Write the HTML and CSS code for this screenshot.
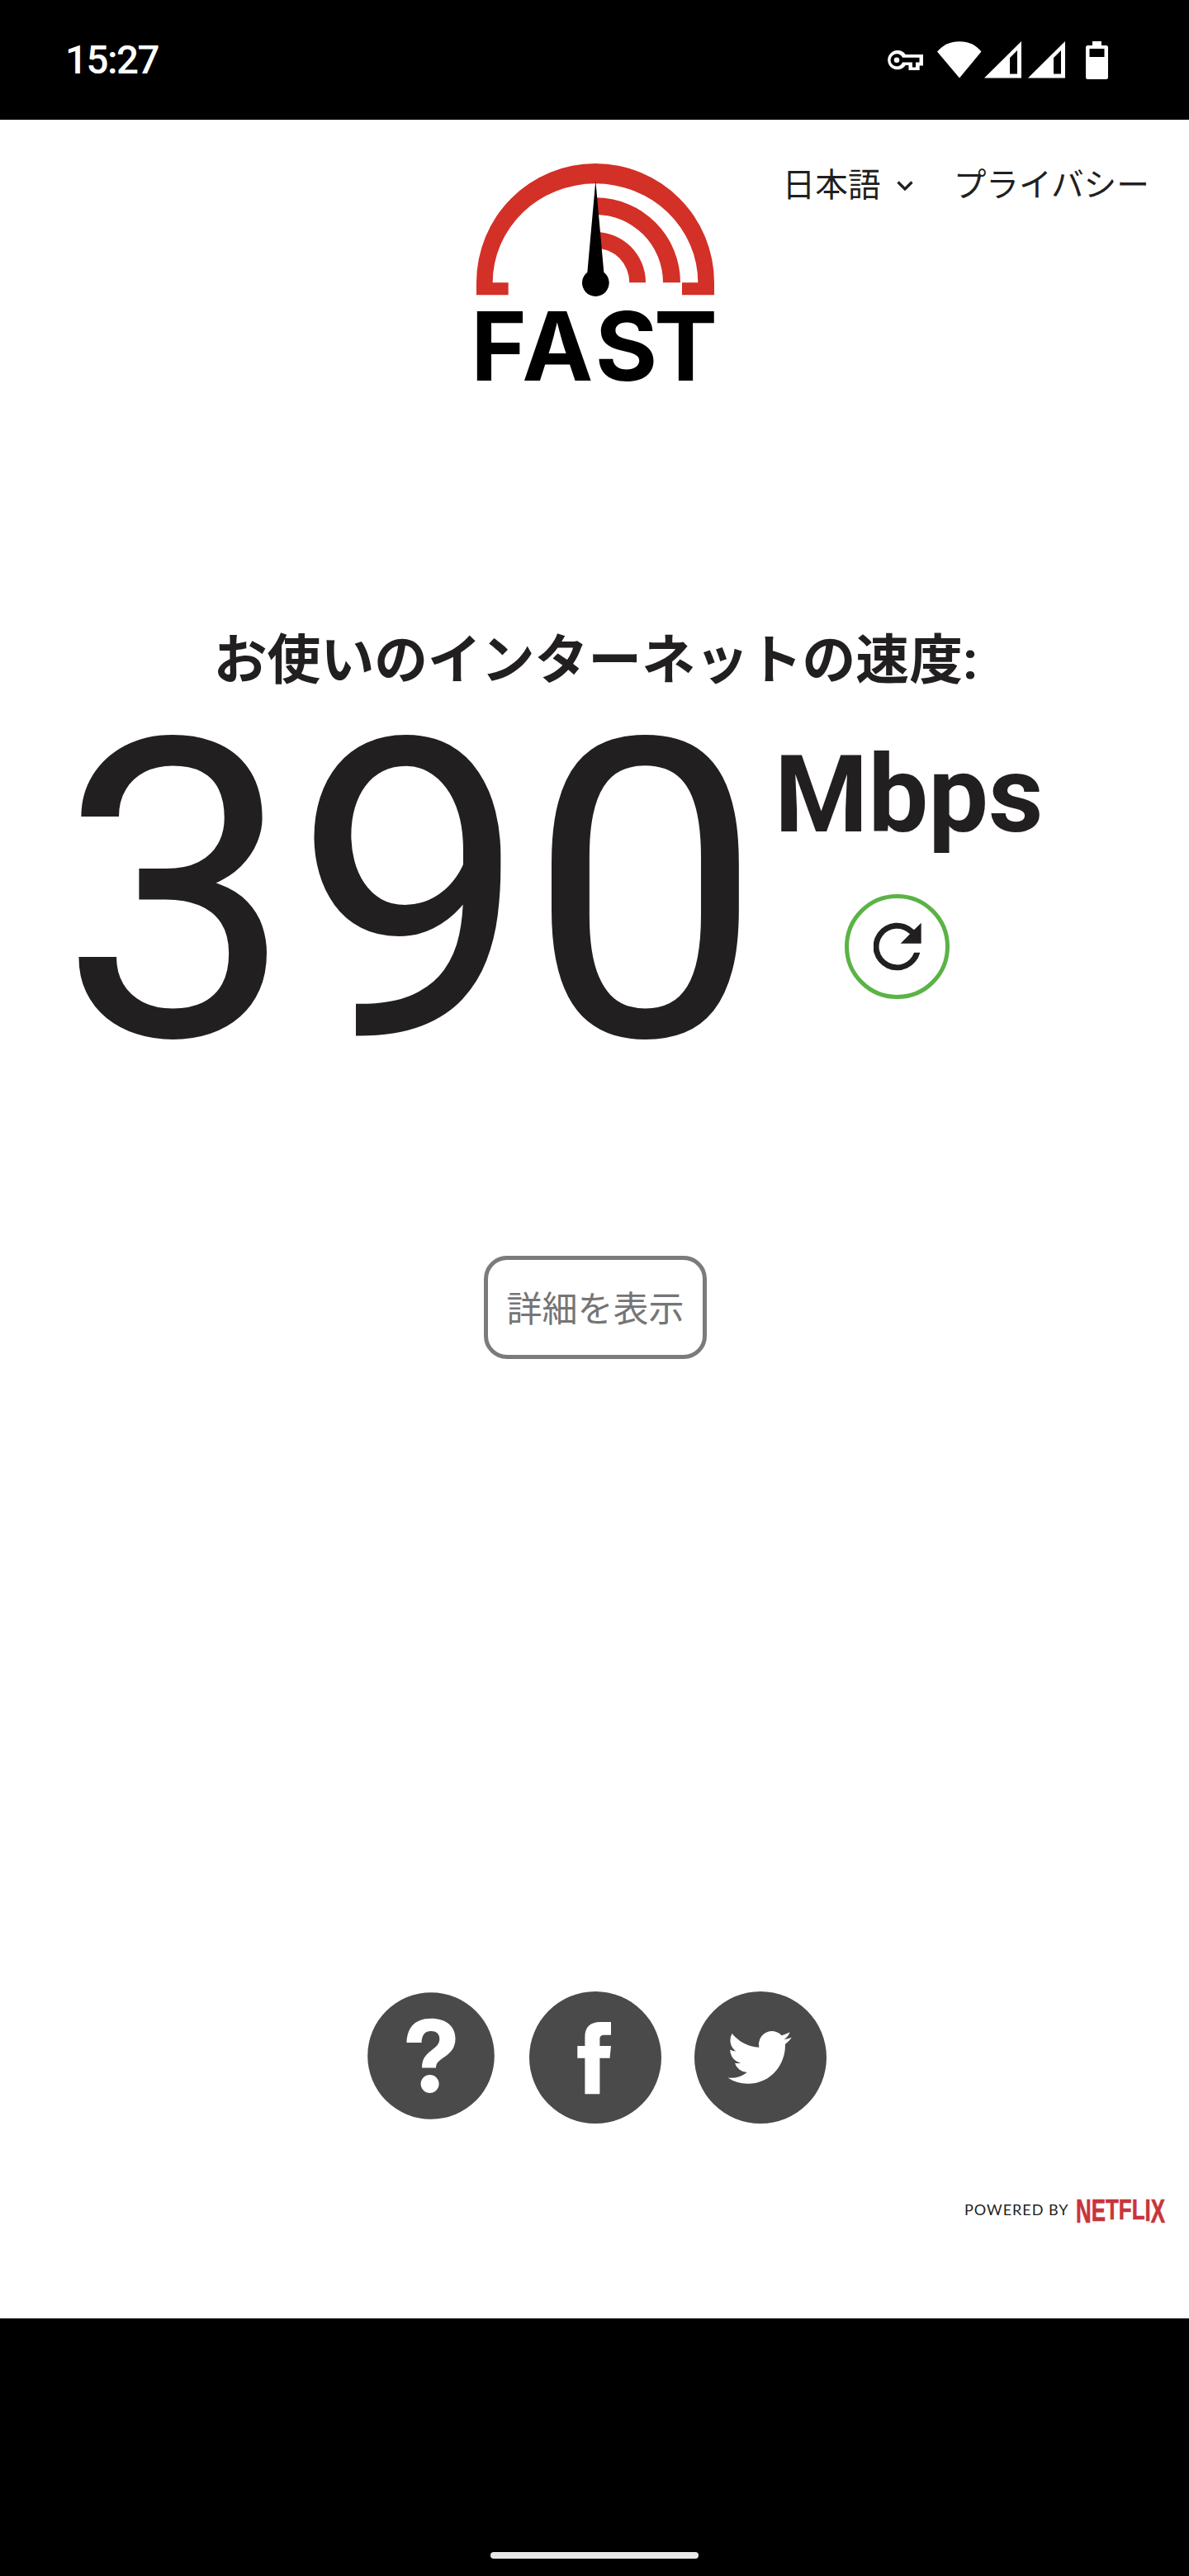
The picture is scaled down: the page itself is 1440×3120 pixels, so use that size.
FILE: index.html
```html
<!DOCTYPE html>
<html lang="ja">
<head>
<meta charset="utf-8">
<title>FAST</title>
<link rel="stylesheet" href="styles.css">
</head>
<body>
<div class="status-bar">
  <span class="clock">15:27</span>
  <div class="status-icons">
    <svg class="icon-key" viewBox="0 0 44 26" width="44" height="26"><path fill="#fff" fill-rule="evenodd" d="M12 1a11.700 11.700 0 0 1 10.700 5H44v13.500h-4.300V25H26.500v-6H22.700A11.700 11.700 0 1 1 12 1ZM12 5.300a7.500 7.500 0 1 0 7 10.200h12v6h4v-6h4.500V9.800H19A7.500 7.500 0 0 0 12 5.300Z"/><circle cx="12" cy="12.700" r="3.300" fill="#fff"/></svg>
    <svg class="icon-wifi" viewBox="0 0 54 45" width="54" height="45"><path fill="#fff" d="M0 12.500C7 4.500 16 .3 27 .3S47 4.500 53.500 12.500L27 44.500Z"/></svg>
    <svg class="icon-signal" viewBox="0 0 45 45" width="45" height="45"><path fill="#fff" fill-rule="evenodd" d="M0 44.500 45 0V44.500ZM31 20V39.500H40V11Z"/></svg>
    <svg class="icon-signal" viewBox="0 0 45 45" width="45" height="45"><path fill="#fff" fill-rule="evenodd" d="M0 44.500 45 0V44.500ZM31 20V39.500H40V11Z"/></svg>
    <svg class="icon-battery" viewBox="0 0 27 46" width="27" height="46"><path fill="#fff" fill-rule="evenodd" d="M8 0H19V5H24.500Q27 5 27 7.500V43.500Q27 46 24.500 46H2.500Q0 46 0 43.500V7.500Q0 5 2.500 5H8ZM4.500 9V19H22.500V9Z"/></svg>
  </div>
</div>

<main class="page">
  <header class="header">
    <svg class="logo" viewBox="51 53 864 801" width="288" height="267">
      <g fill="#d33027">
        <path d="M51 531V485A432 432 0 0 1 915 485V531H798V486H856A373 360 0 0 0 110 486H167V531Z"/>
        <path d="M484 177A308 309 0 0 1 792 486H729A245 247 0 0 0 484 239Z"/>
        <path d="M484 302A182 184 0 0 1 666 486H607A123 125 0 0 0 484 361Z"/>
      </g>
      <path d="M484 116 514 448A49 49 0 1 1 454 448Z"/>
      <text class="logo-text" x="31 217 482 696" y="843">FAST</text>
    </svg>
    <nav class="nav">
      <a class="nav-lang">日本語<svg class="chevron" viewBox="0 0 20 13" width="20" height="13"><path d="M1.500 1.500 10 10 18.500 1.500" fill="none" stroke="#221f20" stroke-width="3.200"/></svg></a>
      <a class="nav-privacy">プライバシー</a>
    </nav>
  </header>

  <h1 class="title">お使いのインターネットの速度:</h1>

  <section class="result">
    <div class="speed">390</div>
    <div class="side">
      <div class="unit">Mbps</div>
      <button class="refresh" aria-label="再実行"><svg viewBox="0 0 174 176" width="58" height="58.700"><path fill="#221f20" d="M169 110A86.500 86.500 0 1 1 147 28L173 2V77H98L132 43A65.500 65.500 0 1 0 147 110Z"/></svg></button>
    </div>
  </section>

  <button class="details">詳細を表示</button>

  <div class="social">
    <svg class="help" viewBox="0 0 154 154" width="154" height="154"><circle cx="77" cy="77" r="76.800" fill="#4a4a4a"/><path fill="#fff" d="M47.400 61C48 42 58 31.700 77 31.700 95 31.700 106.500 41 106.500 56 106.500 67 101 73 94.500 77.500 86 83 83 86 83 91.500H66C66 80 71 75.500 78 70 84 65.500 87.300 62 87.300 56.500 87.300 50 83 47 77 47 70 47 66 51 65.500 61Z"/><circle cx="75.600" cy="111" r="11" fill="#fff"/></svg>
    <svg viewBox="0 0 160 160" width="160" height="160"><circle cx="80" cy="80" r="80" fill="#4a4a4a"/><path fill="#fff" d="M85.400 124.300H67.400V80.700H58.300V66H67.400V55C67.400 43 74 37 86 37H99V52.700H91.800C87 52.700 85.400 54 85.400 58V66H99L97.500 80.700H85.400Z"/></svg>
    <svg viewBox="0 0 160 160" width="160" height="160"><circle cx="80" cy="80" r="80" fill="#4a4a4a"/><path fill="#fff" transform="translate(40.300 40.700) scale(3.230 3.270)" d="M23.953 4.570a10 10 0 01-2.825.775 4.958 4.958 0 002.163-2.723c-.951.555-2.005.959-3.127 1.184a4.920 4.920 0 00-8.384 4.482C7.690 8.095 4.067 6.130 1.640 3.162a4.822 4.822 0 00-.666 2.475c0 1.710.870 3.213 2.188 4.096a4.904 4.904 0 01-2.228-.616v.060a4.923 4.923 0 003.946 4.827 4.996 4.996 0 01-2.212.085 4.936 4.936 0 004.604 3.417 9.867 9.867 0 01-6.102 2.105c-.390 0-.779-.023-1.170-.067a13.995 13.995 0 007.557 2.209c9.053 0 13.998-7.496 13.998-13.985 0-.210 0-.420-.015-.630A9.935 9.935 0 0024 4.590z"/></svg>
  </div>

  <footer class="footer">
    <span class="powered">POWERED BY</span>
    <span class="netflix"><span class="n1">N</span><span class="n2">E</span><span class="n3">T</span><span class="n3">F</span><span class="n3">L</span><span class="n2">I</span><span class="n1">X</span></span>
  </footer>
</main>

<div class="system-nav"><div class="home-bar"></div></div>
</body>
</html>
```
FILE: styles.css
```css
* { box-sizing: border-box; }

body {
  margin: 0;
  width: 1440px;
  height: 3120px;
  display: flex;
  flex-direction: column;
  background: #000;
  color: #221f20;
  font-family: Roboto, "Noto Sans CJK JP", sans-serif;
}

button {
  margin: 0;
  padding: 0;
  background: none;
  font-family: inherit;
}

svg { display: block; flex: none; }

.status-bar {
  height: 145px;
  padding: 0 98px 0 79px;
  display: flex;
  justify-content: space-between;
  align-items: center;
  color: #fff;
}

.clock {
  font-size: 47.500px;
  font-weight: 500;
  letter-spacing: -1.500px;
  line-height: 56px;
}

.status-icons { display: flex; align-items: center; }
.icon-wifi { margin-left: 17px; }
.icon-signal { margin-left: 3px; }
.icon-signal + .icon-signal { margin-left: 8px; }
.icon-battery { margin-left: 25px; }

.page {
  height: 2663px;
  background: #fff;
  display: flex;
  flex-direction: column;
  align-items: center;
}

.header {
  width: 100%;
  padding: 53px 48px 0 0;
  display: grid;
  grid-template-columns: 577px 288px 1fr;
}

.logo {
  grid-column: 2;
  overflow: visible;
}

.logo-text {
  font-family: Inter, sans-serif;
  font-weight: 700;
  font-size: 346px;
  fill: #000;
}

.nav {
  padding-top: 2px;
  display: flex;
  justify-content: flex-end;
  align-items: flex-start;
  font-size: 39.700px;
  line-height: 50px;
  white-space: nowrap;
}

.nav-lang { display: flex; align-items: center; }
.chevron { margin: 0 49px 0 19px; }

.title {
  margin: 287px 0 0;
  padding-left: 3px;
  font-size: 64.800px;
  line-height: 96px;
  font-weight: 700;
  white-space: nowrap;
}

.result {
  width: 100%;
  padding-left: 72px;
  display: flex;
  align-items: flex-start;
}

.speed {
  width: 866px;
  font-size: 505px;
  line-height: 466px;
}

.side {
  width: 320px;
  padding-top: 45px;
  display: flex;
  flex-direction: column;
}

.unit {
  font-size: 129.500px;
  font-weight: 700;
  line-height: 140px;
}

.refresh {
  width: 127px;
  height: 127px;
  margin: 50px 0 0 85px;
  border: 5px solid #5bb346;
  border-radius: 50%;
  display: flex;
  align-items: center;
  justify-content: center;
}

.details {
  width: 270px;
  height: 125px;
  margin: 207px 0 0 2px;
  padding-bottom: 3px;
  border: 5px solid #7b7b7b;
  border-radius: 28px;
  color: #757575;
  font-size: 43px;
  white-space: nowrap;
}

.social {
  margin-top: 766px;
  display: flex;
  gap: 40px;
}

.social .help { margin: 1px 2px 0 5px; }

.footer {
  width: 100%;
  margin-top: 86px;
  padding-left: 1168px;
  display: flex;
  align-items: flex-start;
}

.powered {
  flex: none;
  width: 135px;
  font-family: Lato, sans-serif;
  font-size: 18px;
  letter-spacing: 1px;
  line-height: 36px;
  white-space: nowrap;
}

.netflix {
  flex: none;
  display: flex;
  font-family: "Liberation Sans", sans-serif;
  font-weight: 700;
  font-size: 35px;
  line-height: 36px;
  color: #c9343a;
  -webkit-text-stroke: 0.600px #c9343a;
  transform: scaleX(0.740);
  transform-origin: 0 0;
}

.netflix span { transform-origin: 50% 6px; }
.n1 { transform: scaleY(1.150); }
.n2 { transform: scaleY(1.070); }

.system-nav {
  flex: 1;
  display: flex;
  justify-content: center;
  align-items: flex-end;
  padding-bottom: 21px;
}

.home-bar {
  width: 252px;
  height: 8px;
  border-radius: 4px;
  background: #e8e8e8;
}
```
